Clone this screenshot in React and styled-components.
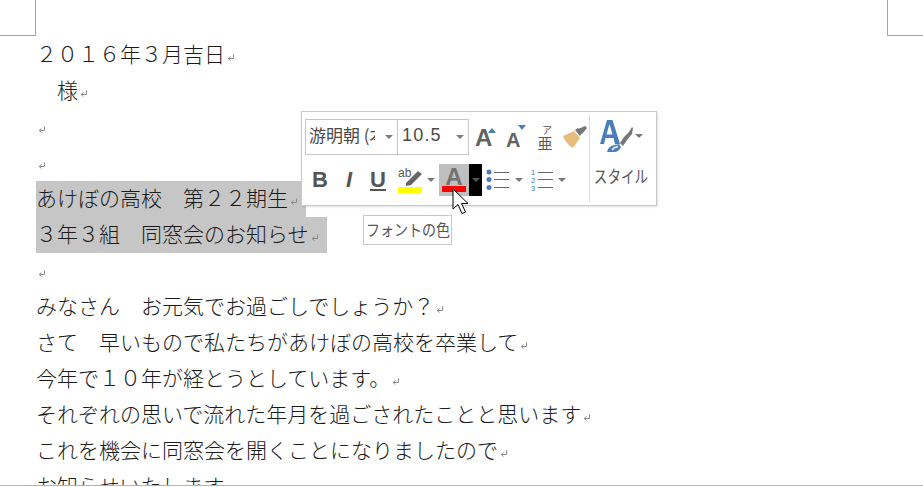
import React from "react";
import styled, { createGlobalStyle } from "styled-components";

const Global = createGlobalStyle`
  html, body { margin: 0; padding: 0; background: #fff; overflow: hidden; }
  #root { width: 923px; height: 487px; }
`;
const Page = styled.div`
  position: relative;
  width: 923px;
  height: 487px;
  background: #fff;
  overflow: hidden;
  font-family: "Noto Sans CJK JP", "Liberation Sans", sans-serif;
`;
const Sheet = styled.div`
  height: 486px;
  box-sizing: border-box;
  border-bottom: 1px solid #b4b4b4;
  overflow: hidden;
`;
const Margins = styled.div`
  display: flex;
  justify-content: space-between;
  height: 36px;
`;
const Crop = styled.div`
  width: 35px;
  height: 35px;
  border-bottom: 1px solid #a6a6a6;
  ${(p) => (p.$right ? "border-left" : "border-right")}: 1px solid #a6a6a6;
`;
const Body = styled.div`
  padding: 1px 0 0 36px;
`;
const Line = styled.div`
  display: flex;
  align-items: flex-start;
  height: 36px;
  font-size: 21px;
  line-height: 32px;
  color: #1a1a1a;
  white-space: pre;
  font-weight: 300;
`;
const Selected = styled(Line)`
  width: ${(p) => p.$w}px;
  background: #c6c6c6;
`;
const MarkSvg = styled.svg`
  flex: none;
  margin: 17px 0 0 2px;
`;
const Mark = () => (
  <MarkSvg width="8" height="8" viewBox="0 0 8 8">
    <path d="M6.5 0.5V4.5H1.5M3.5 2.5L1.2 4.5L3.5 6.5" fill="none" stroke="#8a8a8a" strokeWidth="1" />
  </MarkSvg>
);

const Toolbar = styled.div`
  position: absolute;
  left: 301px;
  top: 111px;
  width: 356px;
  height: 95px;
  box-sizing: border-box;
  background: #fff;
  border: 1px solid #c8c8c8;
  box-shadow: 1px 1px 2px rgba(0, 0, 0, 0.12);
  display: flex;
  padding: 3px 0 3px 3px;
  color: #444;
`;
const Left = styled.div`
  width: 284px;
  display: flex;
  flex-direction: column;
`;
const Row = styled.div`
  display: flex;
  align-items: center;
  height: ${(p) => p.$h}px;
  margin-top: ${(p) => p.$mt || 0}px;
`;
const Combo = styled.div`
  display: flex;
  align-items: center;
  box-sizing: border-box;
  width: ${(p) => p.$w}px;
  height: 36px;
  border: 1px solid #c6c6c6;
  margin-left: ${(p) => (p.$joined ? -1 : 0)}px;
  padding: 0 4px 0 3px;
  color: #4a4a4a;
`;
const FontName = styled.span`
  width: 66px;
  overflow: hidden;
  white-space: pre;
  font-size: 17px;
  line-height: 26px;
  margin-bottom: 4px;
`;
const FontSize = styled.span`
  font-family: "Liberation Sans", sans-serif;
  font-size: 18px;
  letter-spacing: 1.2px;
  margin: 0 0 3px 1px;
`;
const Caret = styled.span`
  flex: none;
  width: 0;
  height: 0;
  border-left: 4px solid transparent;
  border-right: 4px solid transparent;
  border-top: 4px solid ${(p) => p.$c || "#7a7a7a"};
  margin-left: ${(p) => p.$ml || "auto"};
`;
const Icon = styled.svg`
  flex: none;
  margin-left: ${(p) => p.$ml || 0}px;
`;
const FontButton = styled.span`
  flex: none;
  width: ${(p) => p.$w}px;
  margin-left: ${(p) => p.$ml || 0}px;
  text-align: center;
  font-family: "Liberation Sans", sans-serif;
  font-size: 22px;
  font-weight: bold;
  font-style: ${(p) => (p.$i ? "italic" : "normal")};
  text-decoration: ${(p) => (p.$u ? "underline" : "none")};
  text-underline-offset: 2px;
  text-decoration-thickness: 2px;
  color: #555;
  line-height: 24px;
`;
const SizeLetter = styled.span`
  flex: none;
  width: ${(p) => p.$w}px;
  margin-left: ${(p) => p.$ml || 0}px;
  font-family: "Liberation Sans", sans-serif;
  font-size: ${(p) => p.$size}px;
  font-weight: bold;
  line-height: 24px;
  padding-top: ${(p) => p.$pt}px;
  color: #636363;
`;
const Tri = styled.svg`
  flex: none;
  align-self: flex-start;
  margin-top: ${(p) => p.$mt}px;
`;
const Ruby = styled.div`
  flex: none;
  width: 16px;
  margin-left: ${(p) => p.$ml}px;
  display: flex;
  flex-direction: column;
  align-items: center;
  color: #555;
`;
const RubyKana = styled.span`
  font-size: 10px;
  line-height: 11px;
  margin-left: 4px;
`;
const RubyBase = styled.span`
  font-size: 15px;
  line-height: 15px;
`;
const Highlighted = styled.div`
  display: flex;
  height: 32px;
  margin-left: ${(p) => p.$ml}px;
`;
const ColorCell = styled.div`
  width: 30px;
  background: #bfbfbf;
  display: flex;
  flex-direction: column;
  align-items: center;
  font-family: "Liberation Sans", sans-serif;
  font-size: 24px;
  font-weight: bold;
  line-height: 25px;
  color: #727272;
`;
const RedBar = styled.div`
  width: 24px;
  height: 6px;
  background: #f00;
  margin-top: -3px;
`;
const BlackCell = styled.div`
  width: 13px;
  background: #000;
  display: flex;
  align-items: center;
  justify-content: center;
`;
const Divider = styled.div`
  width: 1px;
  background: #dcdcdc;
  height: 87px;
`;
const StyleCol = styled.div`
  display: flex;
  flex-direction: column;
  align-items: center;
  width: 62px;
`;
const StyleTop = styled.div`
  display: flex;
  align-items: center;
  height: 42px;
  margin-left: 0;
`;
const StyleLabel = styled.div`
  margin-top: 7px;
  font-size: 17px;
  line-height: 24px;
  color: #555;
  white-space: pre;
  transform: scaleX(0.8);
`;
const Tooltip = styled.div`
  position: absolute;
  left: 363px;
  top: 215px;
  width: 89px;
  height: 30px;
  box-sizing: border-box;
  border: 1px solid #c8c8c8;
  background: #fff;
  display: flex;
  justify-content: center;
  color: #555;
`;
const TooltipText = styled.span`
  flex: none;
  font-size: 16px;
  line-height: 27px;
  white-space: pre;
  transform: scaleX(0.875);
`;
const Cursor = styled.svg`
  position: absolute;
  left: 452px;
  top: 188px;
`;

const List = ({ numbered, ml }) => (
  <Icon $ml={ml} width={numbered ? 22 : 24} height="22" viewBox={numbered ? "0 0 22 22" : "0 0 24 22"}>
    {numbered ? (
      <g>
        <text x="0" y="6" fontSize="7.5" fill="#3f76b5" fontFamily="Liberation Sans">1</text>
        <text x="0" y="14" fontSize="7.5" fill="#3f76b5" fontFamily="Liberation Sans">2</text>
        <text x="0" y="22" fontSize="7.5" fill="#3f76b5" fontFamily="Liberation Sans">3</text>
        <path d="M7 3.5H22M7 10.5H22M7 18.5H22" stroke="#666" />
      </g>
    ) : (
      <g>
        <circle cx="3" cy="3" r="2.5" fill="#4a7ebb" />
        <circle cx="3" cy="10.5" r="2.5" fill="#4a7ebb" />
        <circle cx="3" cy="18.5" r="2.5" fill="#4a7ebb" />
        <path d="M8 3.5H23M8 10.5H23M8 18.5H23" stroke="#666" />
      </g>
    )}
  </Icon>
);

export default function App() {
  return (
    <Page>
      <Global />
      <Sheet>
        <Margins>
          <Crop />
          <Crop $right />
        </Margins>
        <Body>
          <Line>２０１６年３月吉日<Mark /></Line>
          <Line>　様<Mark /></Line>
          <Line><Mark /></Line>
          <Line><Mark /></Line>
          <Selected $w={270}>あけぼの高校　第２２期生<Mark /></Selected>
          <Selected $w={291}>３年３組　同窓会のお知らせ<Mark /></Selected>
          <Line><Mark /></Line>
          <Line>みなさん　お元気でお過ごしでしょうか？<Mark /></Line>
          <Line>さて　早いもので私たちがあけぼの高校を卒業して<Mark /></Line>
          <Line>今年で１０年が経とうとしています。<Mark /></Line>
          <Line>それぞれの思いで流れた年月を過ごされたことと思います<Mark /></Line>
          <Line>これを機会に同窓会を開くことになりましたので<Mark /></Line>
          <Line>お知らせいたします</Line>
        </Body>
      </Sheet>

      <Toolbar>
        <Left>
          <Row $h={36} $mt={4}>
            <Combo $w={93}>
              <FontName>游明朝 (本文</FontName>
              <Caret />
            </Combo>
            <Combo $w={72} $joined>
              <FontSize>10.5</FontSize>
              <Caret />
            </Combo>
            <SizeLetter $ml={6} $w={13} $size={24} $pt={2}>A</SizeLetter>
            <Tri $mt={9} width="8" height="5" viewBox="0 0 8 5"><path d="M4 0L8 5H0Z" fill="#4a7ebb" /></Tri>
            <SizeLetter $ml={10} $w={12} $size={20} $pt={6}>A</SizeLetter>
            <Tri $mt={6} width="8" height="5" viewBox="0 0 8 5"><path d="M0 0H8L4 5Z" fill="#4a7ebb" /></Tri>
            <Ruby $ml={11}>
              <RubyKana>ア</RubyKana>
              <RubyBase>亜</RubyBase>
            </Ruby>
            <Icon $ml={10} width="24" height="22" viewBox="0 0 24 22">
              <path d="M0 10L11 5L17 12L10 22Q3 18 0 10Z" fill="#e6bd7d" />
              <path d="M12 4L15 2L19 7L17 10Z" fill="#777" />
              <path d="M15 3L22 0L24 2L19 8Z" fill="#777" />
            </Icon>
          </Row>
          <Row $h={32} $mt={9}>
            <FontButton $w={14} $ml={7}>B</FontButton>
            <FontButton $w={14} $ml={16} $i>I</FontButton>
            <FontButton $w={16} $ml={14} $u>U</FontButton>
            <Icon $ml={12} width="24" height="26" viewBox="0 0 24 26">
              <text x="0" y="10" fontSize="12" fill="#555" fontFamily="Liberation Sans">ab</text>
              <path d="M8 16L20 4L24 7L13 18L8 19Z" fill="#666" />
              <rect x="0" y="20" width="24" height="6" fill="#ff0" />
            </Icon>
            <Caret $ml="5px" />
            <Highlighted $ml={4}>
              <ColorCell>
                A
                <RedBar />
              </ColorCell>
              <BlackCell><Caret $c="#555" $ml="0" /></BlackCell>
            </Highlighted>
            <List ml={4} />
            <Caret $ml="5px" />
            <List numbered ml={8} />
            <Caret $ml="5px" />
          </Row>
        </Left>
        <Divider />
        <StyleCol>
          <StyleTop>
            <Icon width="33" height="34" viewBox="0 0 33 34">
              <path fillRule="evenodd" d="M7 1H12.5L20 25H15L13.5 19H5.5L4 25H0ZM6.5 15.5H12.5L9.5 5Z" fill="#4a7ebb" />
              <path d="M20 24L24 18L29 13L32 8L33 9L32 15L27 21L23 27Z" fill="#777" />
              <path d="M7 33Q8 27 15 26L19 25L21 28Q19 33 14 33Z" fill="#4a7ebb" />
              <path d="M12 31Q15 27 18 28" fill="none" stroke="#fff" strokeWidth="1.5" />
            </Icon>
            <Caret $ml="2px" />
          </StyleTop>
          <StyleLabel>スタイル</StyleLabel>
        </StyleCol>
      </Toolbar>

      <Tooltip><TooltipText>フォントの色</TooltipText></Tooltip>
      <Cursor width="20" height="28" viewBox="0 0 20 28">
        <path d="M1 1V21L6 16.5L10 25.5L13.5 24L9.5 15.5H16Z" fill="#fff" stroke="#000" strokeWidth="1" />
      </Cursor>
    </Page>
  );
}
